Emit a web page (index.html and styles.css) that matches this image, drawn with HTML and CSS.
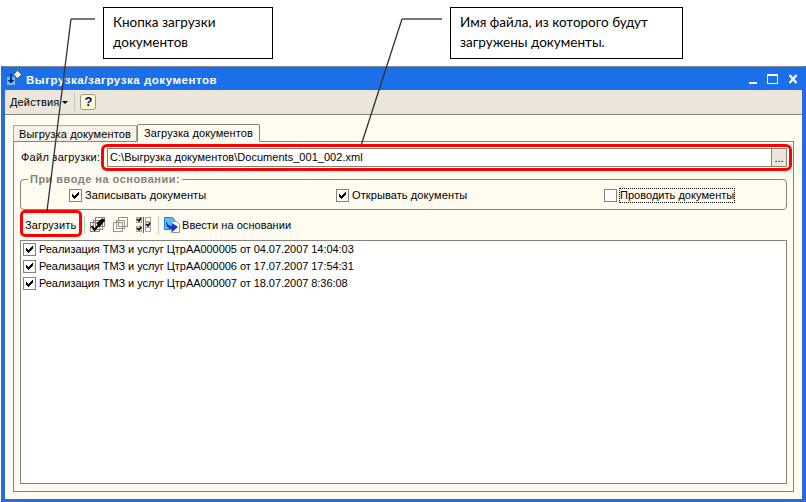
FILE: index.html
```
<!DOCTYPE html>
<html lang="ru">
<head>
<meta charset="utf-8">
<title>Выгрузка/загрузка документов</title>
<link rel="stylesheet" href="styles.css">
</head>
<body>
<svg class="defs" width="0" height="0"><defs><g id="tick"><path d="M2 4h1v1h1v1h1v-1h1v-1h1v-1h1v-1h1v3h-1v1h-1v1h-1v1h-1v1h-1v-1h-1v-1h-1z"/></g></defs></svg>
<header class="notes">
  <div class="note note-a"><span>Кнопка загрузки</span><br><span>документов</span></div>
  <div class="note note-b"><span>Имя файла, из которого будут</span><br><span>загружены документы.</span></div>
</header>
<main class="window">
  <div class="titlebar">
    <svg class="appicon" width="16" height="16" shape-rendering="crispEdges"><path fill="#74b8ef" d="M1 6h8v8H1z"/><path fill="#001b79" d="M4 3h2v2H4zM4 6h2v3h2v1H7v1H6v1H4v-1H3v-1H2V9h2z"/><path fill="#ffffb0" d="M11 0h1v1h1v1h1v1h1v1h-1v1h-1v1h-1v1h-1V6h-1V5H9V4H8V3h1V2h1V1h1z"/></svg>
    <h1>Выгрузка/загрузка документов</h1>
    <svg class="winbtns" width="52" height="16" shape-rendering="crispEdges" fill="none" stroke="#fff"><path stroke-width="2" d="M1 12h8"/><path d="M19.500 3.500h10v9h-10z"/><path d="M19 4.500h11"/><path shape-rendering="auto" stroke-width="2.200" d="M41.500 4l7 8M48.500 4l-7 8"/></svg>
  </div>
  <nav class="menubar"><span class="t-act">Действия</span><i class="caret"></i><i class="sep"></i><b class="help">?</b></nav>
  <div class="content">
    <div class="tabs"><div class="tab">Выгрузка документов</div><div class="tab active">Загрузка документов</div></div>
    <section class="panel">
      <div class="file"><label>Файл загрузки:</label><div class="field"><span>C:\Выгрузка документов\Documents_001_002.xml</span><button>...</button></div></div>
      <div class="group">
        <div class="legend">При вводе на основании:</div>
        <div class="opt o1"><svg class="cb" width="11" height="11"><use href="#tick"/></svg><span>Записывать документы</span></div>
        <div class="opt o2"><svg class="cb" width="11" height="11"><use href="#tick"/></svg><span>Открывать документы</span></div>
        <div class="opt o3"><svg class="cb" width="11" height="11"></svg><span class="focus">Проводить документы</span></div>
      </div>
      <div class="tools">
        <span class="load">Загрузить</span><i class="sep s1"></i>
        <svg class="i1" width="16" height="16" shape-rendering="crispEdges"><g fill="#fff" stroke="#85837a"><path d="M5.500 .5h9v9h-9zM3.500 3.500h9v9h-9zM.5 5.500h9v9h-9z"/></g><path fill="none" stroke="#000" stroke-width="2" shape-rendering="auto" d="M1.500 9l3 4 5-6M9 9l5.500-6.500M7 7l6-5"/></svg>
        <svg class="i2" width="16" height="16" shape-rendering="crispEdges"><g fill="#fff" stroke="#96948b"><path d="M5.500 .5h9v9h-9zM3.500 3.500h8v8h-8zM.5 5.500h9v9h-9z"/></g></svg>
        <svg class="i3" width="16" height="16" shape-rendering="crispEdges"><path fill="#fff" stroke="#aaa89e" d="M.5 .5h5v5h-5zM.5 9.500h5v5h-5zM9.500 .5h5v4h-5zM9.500 10.500h5v4h-5zM9.500 5.500h5v5h-5z"/><path stroke="#555" d="M7.500 0v16"/><path fill="none" stroke="#000" stroke-width="1.600" shape-rendering="auto" d="M1 2l2 2 2-3M1 11l2 2 2-3M10 7l2 2 2-3"/></svg>
        <i class="sep s2"></i>
        <svg class="i4" width="17" height="16"><path fill="#54c3f8" stroke="#178ac6" d="M.5 .5h8l2 2v10H.5z"/><path fill="#fff" stroke="#99978f" d="M7.500 4.500h5l3 3v8h-8z"/><path fill="#1737c8" d="M2 4v3q1 5 6 5v3l6-5-6-4v3Q4 9 2 4z"/></svg>
        <span class="t-enter">Ввести на основании</span>
      </div>
      <div class="list">
        <div class="row"><svg class="cb" width="11" height="11"><use href="#tick"/></svg><span>Реализация ТМЗ и услуг ЦтрАА000005 от 04.07.2007 14:04:03</span></div>
        <div class="row"><svg class="cb" width="11" height="11"><use href="#tick"/></svg><span>Реализация ТМЗ и услуг ЦтрАА000006 от 17.07.2007 17:54:31</span></div>
        <div class="row"><svg class="cb" width="11" height="11"><use href="#tick"/></svg><span>Реализация ТМЗ и услуг ЦтрАА000007 от 18.07.2007 8:36:08</span></div>
      </div>
    </section>
  </div>
</main>
<svg class="leaders" width="806" height="502" fill="none"><path stroke="#777" stroke-width="2" shape-rendering="crispEdges" d="M71 19h24M402 19h40"/><path stroke="#303030" stroke-width="1.300" d="M71 19L47 211M402 19L361.500 144"/></svg>
</body>
</html>
```
FILE: styles.css
```
* { box-sizing: border-box; }
body { margin: 0; width: 806px; height: 502px; overflow: hidden; position: relative; background: #fff; color: #000; font: 11px/13px "Liberation Sans", sans-serif; }
.defs, .leaders { position: absolute; left: 0; top: 0; pointer-events: none; }
span, label, .tab, .legend { white-space: nowrap; }
svg { flex: none; display: block; }
.notes { height: 66px; display: flex; padding: 7px 0 0 103px; }
.note { height: 52px; border: 1px solid #000; padding: 4px 9px; font: 13.500px/20px Lato, "Open Sans", sans-serif; }
.note-a { width: 170px; margin-right: 177px; }
.note-b { width: 233px; }
.window { height: 436px; margin-left: 1px; border: solid #2b6bd9; border-width: 0 4px 3px; border-top: 1px solid #85888c; display: flex; flex-direction: column; }
.titlebar { height: 23px; margin: 0 -4px; padding: 0 6px 0 5px; background: #1b6fe8; display: flex; align-items: center; flex: none; }
.appicon { margin-top: 1px; }
h1 { margin: 2px 0 0 4px; font-size: 11.500px; line-height: 14px; color: #fff; flex: 1; letter-spacing: .55px; }
.menubar { height: 25px; flex: none; background: #ebe5db; border-bottom: 1px solid #85827a; display: flex; align-items: center; padding-left: 5px; }
.t-act { letter-spacing: .15px; }
.caret { border: 3px solid transparent; border-top-color: #000; border-bottom: 0; margin-left: 3px; }
.sep { width: 1px; height: 18px; background: #cdc8bc; }
.menubar .sep { margin: 0 5px 0 6px; }
.help { width: 16px; height: 16px; border: 1px solid #99968c; border-radius: 3px; background: #ffffd2; color: #000080; font-size: 13px; line-height: 14px; text-align: center; }
.content { flex: 1; background: #fffbf0; padding: 9px 8px 7px; display: flex; flex-direction: column; }
.tabs { height: 18px; flex: none; display: flex; align-items: flex-end; position: relative; margin-bottom: -1px; }
.tab { width: 124px; height: 17px; border: 1px solid #aaa69b; border-bottom-color: #85827a; background: #f6f1e7; padding: 2px 0 0 5px; letter-spacing: .13px; }
.tab.active { width: 123px; height: 18px; background: #fffbf0; border-color: #85827a; border-bottom-color: #fffbf0; border-radius: 2px 2px 0 0; padding-left: 6px; letter-spacing: .1px; }
.panel { flex: 1; border: 1px solid #85827a; padding: 2px 0 7px 6px; display: flex; flex-direction: column; }
.file { height: 27px; flex: none; display: flex; align-items: center; }
.file label { width: 87px; flex: none; padding-left: 1px; letter-spacing: .25px; }
.field { position: relative; flex: none; width: 680px; height: 19px; border: 1px solid #85827a; background: #fff; display: flex; align-items: center; padding-left: 2px; }
.field::after { content: ""; position: absolute; inset: -5px -6px -5px -7px; border: 3px solid #f00; border-radius: 6px; }
.field span { flex: 1; letter-spacing: .03px; }
button { width: 15px; height: 17px; padding: 0; border: 0; border-left: 1px solid #85827a; background: #ebe5db; font: 11px/12px "Liberation Sans", sans-serif; }
.group { width: 767px; height: 31px; flex: none; margin-top: 8px; border: 1px solid #85827a; border-radius: 4px; position: relative; display: flex; padding: 9px 0 0 48px; }
.legend { position: absolute; left: 7px; top: -7px; background: #fffbf0; padding: 0 2px; font-weight: bold; color: #85827a; letter-spacing: .48px; }
.opt { display: flex; flex: none; height: 13px; width: 267px; align-items: center; letter-spacing: .1px; }
.o2 { width: 268px; }
.o3 { width: auto; letter-spacing: .03px; }
.cb { width: 13px; height: 13px; border: 1px solid #85827a; background: #fff; margin-right: 3px; }
.focus { outline: 1px dotted #000; }
.tools { height: 30px; flex: none; display: flex; align-items: center; }
.load { width: 62px; height: 27px; margin-top: -4px; border: 3px solid #f00; border-radius: 5px; padding: 6px 2px 0; letter-spacing: .12px; }
.s1 { margin: 0 5px 0 2px; }
.i2, .i3 { margin-left: 7px; }
.s2 { margin: 0 5px 0 6px; }
.t-enter { margin-left: 1px; letter-spacing: .05px; }
.list { width: 767px; flex: 1; border: 1px solid #85827a; background: #fff; padding: 0 2px; }
.row { display: flex; align-items: center; height: 17px; letter-spacing: -.05px; }
```
